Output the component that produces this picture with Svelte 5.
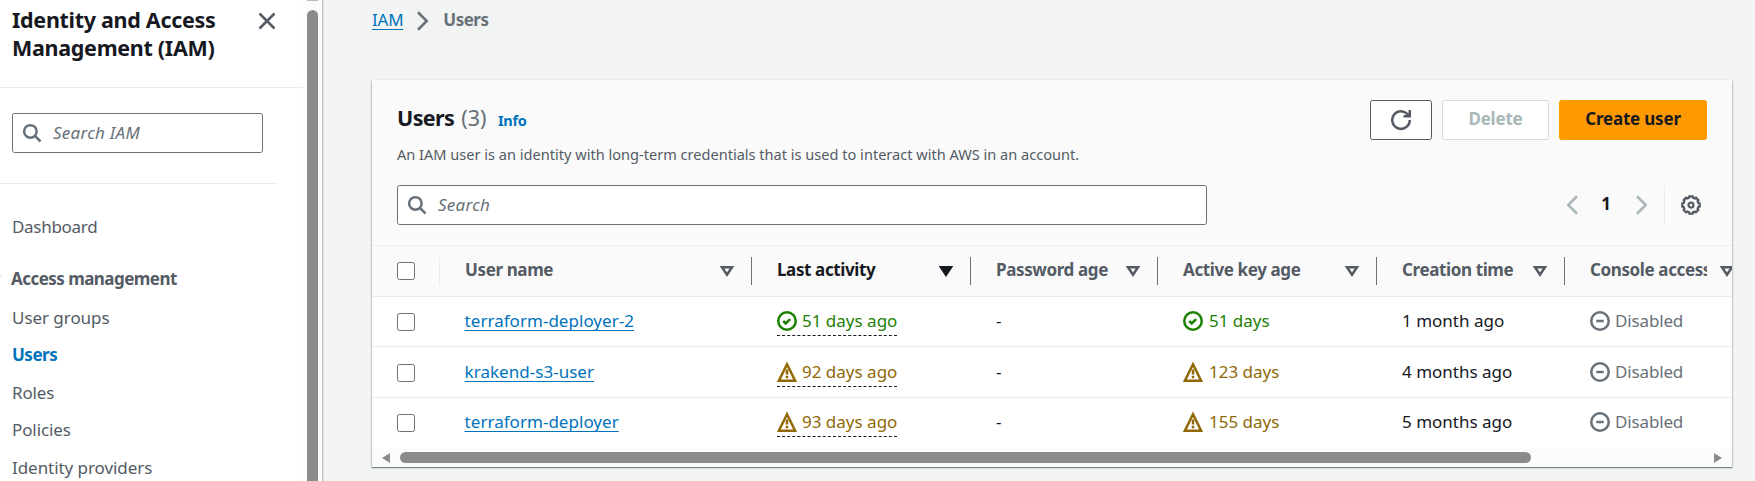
<script>
  const nav = [
    { label: 'User groups', ls: -0.05 },
    { label: 'Users', ls: -0.5, active: true },
    { label: 'Roles', ls: -0.15 },
    { label: 'Policies', ls: -0.1 },
    { label: 'Identity providers', ls: -0.06 },
  ];
  const columns = [
    { label: 'User name' },
    { label: 'Last activity', sorted: true },
    { label: 'Password age' },
    { label: 'Active key age' },
    { label: 'Creation time' },
    { label: 'Console access' },
  ];
  const users = [
    { name: 'terraform-deployer-2', activity: '51 days ago', key: '51 days', created: '1 month ago', ok: true },
    { name: 'krakend-s3-user', activity: '92 days ago', key: '123 days', created: '4 months ago', ok: false },
    { name: 'terraform-deployer', activity: '93 days ago', key: '155 days', created: '5 months ago', ok: false },
  ];
  const icons = {
    close: 'M2 2l12 12M14 2L2 14',
    next: 'M4 1l7 7-7 7',
    prev: 'M12 1L5 8l7 7',
    caret: 'M4 5h8l-4 6z',
    refresh: 'M10 5h5V0M15 8a7 7 0 1 1-.7-3',
    off: 'M11 8H5',
    check: 'M5 8l2 2 3.5-3.5',
    warn: 'M8 1.8L14.5 15h-13z',
    bang: 'M8 6v4M8 11v2',
  };

  const point = (r, deg) => {
    const a = (deg * Math.PI) / 180;
    return `${(8 + r * Math.cos(a)).toFixed(2)} ${(8 + r * Math.sin(a)).toFixed(2)}`;
  };
  let gear = '';
  for (let i = 0; i < 8; i++) {
    const c = i * 45;
    gear += `${i ? 'L' : 'M'}${point(6.1, c - 15)}L${point(7.1, c - 11)}L${point(7.1, c + 11)}L${point(6.1, c + 15)}`;
  }
  gear += 'Z';
</script>

{#snippet icon(name)}
  <svg class="icon {name}" viewBox="0 0 16 16" aria-hidden="true">
    {#if name === 'search'}
      <circle cx="6.7" cy="6.7" r="5" /><path d="M10.3 10.3l4.5 4.5" />
    {:else if name === 'gear'}
      <path d={gear} /><circle cx="8" cy="8" r="2" />
    {:else if name === 'off' || name === 'check'}
      <circle cx="8" cy="8" r="7" /><path d={icons[name]} />
    {:else if name === 'warn'}
      <path d={icons.warn} /><path d={icons.bang} />
    {:else if name === 'sorted'}
      <path d={icons.caret} fill="currentColor" />
    {:else}
      <path d={icons[name]} />
    {/if}
  </svg>
{/snippet}

<div class="page">
  <aside>
    <div class="side">
      <header>
        <h2>Identity and Access<br />Management (IAM)</h2>
        {@render icon('close')}
      </header>
      <div class="find">
        <div class="input">{@render icon('search')}<span class="iam">Search IAM</span></div>
      </div>
      <nav>
        <div class="item first">Dashboard</div>
        <div class="group">Access management</div>
        {#each nav as item}
          <div class="item" class:active={item.active}><span style="letter-spacing:{item.ls}px">{item.label}</span></div>
        {/each}
      </nav>
    </div>
    <div class="vbar"><i class="nub"></i><i class="thumb"></i></div>
  </aside>

  <main>
    <div class="crumbs">
      <a>IAM</a>{@render icon('next')}<b>Users</b>
    </div>
    <section>
      <div class="top">
        <div class="heading">
          <div class="title"><h1>Users</h1><span class="count">(3)</span><span class="info">Info</span></div>
          <p>An IAM user is an identity with long-term credentials that is used to interact with AWS in an account.</p>
        </div>
        <div class="actions">
          <div class="btn refreshbtn">{@render icon('refresh')}</div>
          <div class="btn delete">Delete</div>
          <div class="btn create">Create user</div>
        </div>
      </div>
      <div class="tools">
        <div class="input wide">{@render icon('search')}<span>Search</span></div>
        <div class="pager">
          {@render icon('prev')}<b>1</b>{@render icon('next')}
          <div class="prefs">{@render icon('gear')}</div>
        </div>
      </div>
      <div class="row head">
        <div class="pick"><i class="box"></i></div>
        {#each columns as col}
          <div class="cell" class:sorted={col.sorted}><span>{col.label}</span>{@render icon(col.sorted ? 'sorted' : 'caret')}</div>
        {/each}
      </div>
      <div class="body">
        {#each users as u}
          {@const mark = u.ok ? 'check' : 'warn'}
          <div class="row">
            <div class="pick"><i class="box"></i></div>
            <div class="cell name"><a>{u.name}</a></div>
            <div class="cell"><span class="status dashed {mark}-tone">{@render icon(mark)}{u.activity}</span></div>
            <div class="cell">-</div>
            <div class="cell"><span class="status {mark}-tone">{@render icon(mark)}{u.key}</span></div>
            <div class="cell">{u.created}</div>
            <div class="cell"><span class="status off-tone">{@render icon('off')}{'Disabled'}</span></div>
          </div>
        {/each}
      </div>
      <div class="hbar"><i class="left"></i><i class="track"><i></i></i><i class="right"></i></div>
    </section>
  </main>
</div>

<style>
  :global(body) { overflow: hidden; }
  * { box-sizing: border-box; }
  .page {
    display: flex; width: 1755px; height: 481px; overflow: hidden;
    background: #f2f3f3; color: #16191f;
    font: 17px/20px 'Noto Sans', sans-serif; white-space: nowrap;
  }
  .icon { display: block; flex: none; width: 20px; height: 20px; fill: none; stroke: currentColor; stroke-width: 2; overflow: visible; }
  .icon.gear { stroke-width: 1.8; }
  a { color: #0073bb; text-decoration: underline; text-decoration-thickness: 1px; text-underline-offset: 3px; text-decoration-skip-ink: none; }

  aside { display: flex; flex: none; width: 323px; height: 481px; background: #fff; border-right: 1px solid #bcc1c2; color: #545b64; }
  .side { width: 303px; height: 481px; overflow: hidden; }
  header { display: flex; justify-content: space-between; height: 88px; padding: 6px 26px 0 12px; border-bottom: 1px solid #eaeded; }
  h2 { margin: 0; font-size: 21.5px; line-height: 28px; font-weight: 700; color: #16191f; letter-spacing: -.3px; }
  header .icon { margin-top: 5px; }
  .find { width: 278px; height: 96px; padding: 25px 0 0 12px; border-bottom: 1px solid #eaeded; }
  .input {
    display: flex; align-items: center; gap: 11px; width: 251px; height: 40px; padding-left: 9px;
    border: 1px solid #687078; border-radius: 2.5px; background: #fff; color: #687078; font-style: italic;
  }
  .input span { padding-bottom: 1px; letter-spacing: .25px; }
  nav { padding: 24px 0 0 12px; line-height: 37.5px; }
  .item { height: 37.5px; }
  .first { height: 52.2px; letter-spacing: -.3px; }
  .group { position: relative; height: 38.6px; margin-left: -1px; font-weight: 700; letter-spacing: -.54px; }
  .group::before { content: ''; position: absolute; left: -11px; top: 16px; width: 1px; height: 1px; background: #c4c8ca; }
  .active { font-weight: 700; color: #0073bb; }
  .vbar { width: 19px; padding: 0 4px; background: #fcfcfc; }
  .vbar i { display: block; background: #8b8b8b; }
  .nub { height: 1px; margin-bottom: 9px; opacity: .6; }
  .thumb { width: 11px; height: 500px; border-radius: 5.5px; }

  main { flex: 1; padding-left: 49px; box-shadow: inset 1px 0 #e3e6e6; }
  .crumbs { display: flex; align-items: center; height: 80px; padding-bottom: 41px; color: #687078; }
  .crumbs a { letter-spacing: -.25px; }
  .crumbs .icon { margin: 3px 10px 0; }
  .crumbs b { font-weight: 700; letter-spacing: -.5px; }

  section {
    width: 1360px; height: 387px; overflow: hidden; background: #fff;
    box-shadow: 0 -1px #eaeded, 0 1px 1px rgba(0,28,36,.3), 1px 1px 1px rgba(0,28,36,.15), -1px 1px 1px rgba(0,28,36,.15);
  }
  .top { display: flex; justify-content: space-between; height: 105px; padding: 20px 25px 0; background: #fafafa; }
  .title { display: flex; align-items: baseline; height: 36px; line-height: 36px; }
  h1 { margin: 0; font-size: 21.5px; font-weight: 700; letter-spacing: -.6px; }
  .count { margin-left: 7px; font-size: 21.5px; color: #687078; }
  .info { margin-left: 11.5px; font-size: 14.5px; font-weight: 700; color: #0073bb; letter-spacing: -.3px; }
  p { margin: 7px 0 0; font-size: 14.57px; line-height: 22px; color: #545b64; }
  .actions { display: flex; gap: 10px; }
  .btn {
    display: flex; align-items: center; justify-content: center; height: 40px; padding-bottom: 2px;
    border: 1px solid #545b64; border-radius: 2.5px; background: #fff; font-weight: 700; letter-spacing: -.2px;
  }
  .refreshbtn { width: 62px; padding: 0; color: #545b64; }
  .delete { width: 107px; border-color: #d5dbdb; color: #aab7b8; }
  .create { width: 148px; border-color: #f90; background: #f90; }
  .tools { display: flex; justify-content: space-between; height: 60px; padding: 0 25px; background: #fafafa; }
  .input.wide { width: 810px; }
  .pager { display: flex; align-items: center; height: 40px; color: #aab7b8; }
  .pager b { width: 10px; margin: 0 21px 3px 19px; text-align: center; color: #16191f; font-weight: 700; }
  .prefs { display: flex; align-items: center; height: 40px; margin-left: 12px; padding: 0 6px 0 16px; border-left: 1px solid #eaeded; color: #545b64; }

  .row { display: grid; grid-template-columns: 68px 312px 219px 187px 219px 188px 187px; height: 51px; border-top: 1px solid #eaeded; }
  .body .row:first-child { height: 50px; }
  .head { background: #fafafa; color: #545b64; font-weight: 700; }
  .pick { display: flex; align-items: center; padding: 0 0 1px 25px; }
  .box { width: 18px; height: 18px; border: 1px solid #687078; border-radius: 2.5px; background: #fff; }
  .cell { display: flex; align-items: center; padding: 0 0 3px 25px; }
  .body .row:not(:last-child) .cell { padding-bottom: 1px; }
  .body .row:not(:last-child) .pick { padding: 1px 0 0 25px; }
  .body .cell.name { padding-left: 24.6px; letter-spacing: .03px; }
  .head .pick, .head .cell {
    padding-bottom: 1px;
    background: linear-gradient(#687078, #687078) right 11px / 1px 28px no-repeat;
  }
  .head .pick { background-image: linear-gradient(#eaeded, #eaeded); }
  .head .cell { justify-content: space-between; padding-right: 15px; }
  .head .cell span { padding-bottom: 2px; letter-spacing: -.38px; }
  .head .cell:last-child span { width: 117px; overflow: hidden; }
  .head .sorted { color: #16191f; }
  .status { display: flex; align-items: center; gap: 6px; height: 28px; }
  .dashed { width: 120px; height: 27px; gap: 5px; padding-bottom: 2px; margin-top: 3px; border-bottom: 1px dashed #16191f; }
  .off-tone { gap: 5px; color: #687078; letter-spacing: -.15px; }
  .check-tone { color: #1d8102; }
  .warn-tone { color: #906806; }

  .hbar { display: flex; align-items: center; height: 19px; padding: 0 10px; background: #fcfcfc; }
  .hbar .left, .hbar .right { border: 5px solid transparent; border-right: 8px solid #8b8b8b; border-left: 0; }
  .hbar .right { border-right: 0; border-left: 8px solid #8b8b8b; }
  .track { flex: 1; padding-left: 10px; }
  .track i { display: block; width: 1131px; height: 11px; border-radius: 5.5px; background: #8b8b8b; }
</style>
